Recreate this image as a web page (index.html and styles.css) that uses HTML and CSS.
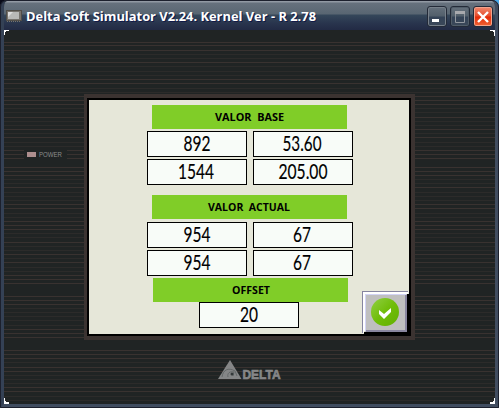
FILE: index.html
```html
<!DOCTYPE html>
<html lang="es">
<head>
<meta charset="utf-8">
<title>Delta Soft Simulator</title>
<link rel="stylesheet" href="styles.css">
</head>
<body>
<div class="window">
  <header class="titlebar">
    <svg class="app-icon" width="16" height="12" viewBox="0 0 16 12"><rect x=".5" y=".5" width="15" height="10" fill="#77736d" stroke="#514e49"/><rect x="2" y="2" width="11" height="7" fill="#b9b9b7"/><path d="M2 2h5L2 7z" fill="#ddd"/><path d="M1 11.5h14" stroke="#77736d" stroke-dasharray="1 1"/></svg>
    <svg class="title" width="294" height="20"><text x="1" y="14" textLength="290" lengthAdjust="spacingAndGlyphs">Delta Soft Simulator V2.24. Kernel Ver - R 2.78</text></svg>
    <div class="controls">
      <span class="control"><svg width="18" height="18"><path d="M4 12h7v3H4z" fill="#fff"/></svg></span>
      <span class="control"><svg width="18" height="18"><path d="M4.500 5v10.500h9V5" fill="none" stroke="#92979f"/><path d="M4 4h10v3H4z" fill="#a8a9ae"/></svg></span>
      <span class="control close"><svg width="18" height="18"><path d="M4 5l10 10M14 5L4 15" stroke="#fff" stroke-width="2.4"/></svg></span>
    </div>
  </header>
  <main class="device">
    <svg class="stripes" width="491" height="374" viewBox="4 30 491 374" shape-rendering="crispEdges">
      <path class="dim" d="M4 54.500h491M4 58.500h491M4 66.500h491M4 71.500h491M4 75.500h491M4 88.500h491M4 92.500h491M4 108.500h491M4 112.500h491M4 121.500h491M4 125.500h491M4 133.500h491M4 142.500h491M4 146.500h491M4 179.500h491M4 183.500h491M4 192.500h491M4 196.500h491M4 200.500h491M4 213.500h491M4 217.500h491M4 233.500h491M4 237.500h491M4 246.500h491M4 250.500h491M4 258.500h491M4 267.500h491M4 271.500h491M4 308.500h491M4 312.500h491M4 316.500h491M4 320.500h491M4 325.500h491M4 362.500h491M4 375.500h491M4 379.500h491M4 383.500h491M4 396.500h491M4 400.500h491"/>
      <path class="strong" d="M4 42.500h491M4 45.500h491M4 50.500h491M4 62.500h491M4 79.500h491M4 83.500h491M4 96.500h491M4 100.500h491M4 104.500h491M4 117.500h491M4 129.500h491M4 137.500h491M4 150.500h491M4 154.500h491M4 158.500h491M4 167.500h491M4 171.500h491M4 175.500h491M4 187.500h491M4 204.500h491M4 208.500h491M4 221.500h491M4 225.500h491M4 229.500h491M4 242.500h491M4 254.500h491M4 262.500h491M4 275.500h491M4 279.500h491M4 283.500h491M4 296.500h491M4 300.500h491M4 304.500h491M4 329.500h491M4 333.500h491M4 337.500h491M4 350.500h491M4 354.500h491M4 358.500h491M4 367.500h491M4 371.500h491M4 387.500h491M4 391.500h491"/>
      <path class="corner" d="M4 30h5v1H6v1H5v3H4zM495 30h-5v1h3v1h1v4h1zM4 404v-6h1v3h1v1h3v2zM495 404v-6h-1v3h-1v1h-3v2z"/>
    </svg>
    <div class="power"><i class="led"></i><svg width="25" height="9"><text x="0" y="7" textLength="23" lengthAdjust="spacingAndGlyphs">POWER</text></svg></div>
    <section class="bezel">
      <div class="screen">
        <div class="label"><svg width="195" height="24"><text x="63" y="16" textLength="69" lengthAdjust="spacingAndGlyphs" xml:space="preserve">VALOR  BASE</text></svg></div>
        <div class="values">
          <div class="field"><svg width="98" height="24"><text x="49" y="19" textLength="27" lengthAdjust="spacingAndGlyphs">892</text></svg></div>
          <div class="field"><svg width="98" height="24"><text x="48" y="19" textLength="39" lengthAdjust="spacingAndGlyphs">53.60</text></svg></div>
          <div class="field"><svg width="98" height="24"><text x="48" y="19" textLength="36" lengthAdjust="spacingAndGlyphs">1544</text></svg></div>
          <div class="field"><svg width="98" height="24"><text x="49" y="19" textLength="49" lengthAdjust="spacingAndGlyphs">205.00</text></svg></div>
        </div>
        <div class="label actual"><svg width="195" height="24"><text x="56" y="16" textLength="82" lengthAdjust="spacingAndGlyphs" xml:space="preserve">VALOR  ACTUAL</text></svg></div>
        <div class="values current">
          <div class="field"><svg width="98" height="24"><text x="49" y="19" textLength="27" lengthAdjust="spacingAndGlyphs">954</text></svg></div>
          <div class="field"><svg width="98" height="24"><text x="48" y="19" textLength="18" lengthAdjust="spacingAndGlyphs">67</text></svg></div>
          <div class="field"><svg width="98" height="24"><text x="49" y="19" textLength="27" lengthAdjust="spacingAndGlyphs">954</text></svg></div>
          <div class="field"><svg width="98" height="24"><text x="48" y="19" textLength="18" lengthAdjust="spacingAndGlyphs">67</text></svg></div>
        </div>
        <div class="label offset"><svg width="195" height="24"><text x="79" y="16" textLength="38" lengthAdjust="spacingAndGlyphs">OFFSET</text></svg></div>
        <div class="field single"><svg width="98" height="24"><text x="49" y="19" textLength="18" lengthAdjust="spacingAndGlyphs">20</text></svg></div>
        <svg class="confirm" width="49" height="45" viewBox="0 0 49 45" shape-rendering="crispEdges">
          <defs><linearGradient id="leaf" x2="1" y2="1"><stop stop-color="#91d044"/><stop offset=".5" stop-color="#70bd09"/><stop offset="1" stop-color="#61b000"/></linearGradient></defs>
          <path d="M47 0h2v45H0v-2h2v-2h43V3h2z" fill="#000"/>
          <path d="M0 0h46v1H1v41H0z" fill="#8685a0"/><path d="M1 1h45v2H3v37H2v2H1z" fill="#fff"/>
          <path d="M3 3h42v38H3z" fill="#bfbfbf"/><path d="M3 3h41v1H4v36H3z" fill="#d2d4f5"/>
          <path d="M43 4h2v37H4v-2h39z" fill="#89869f"/>
          <g shape-rendering="auto"><circle cx="23" cy="21" r="14" fill="url(#leaf)"/><path d="M17 19l5 4 7-6v4l-7 7-5-5z" fill="#fff"/></g>
        </svg>
      </div>
    </section>
    <div class="brand">
      <svg width="66" height="22" viewBox="0 0 66 22"><path d="M12 0L23.500 19H0z" fill="#858687"/><path d="M4 17c1-7 6-10 13-6l2 5M10 17c-1-4 2-6 6-5l-1 4" fill="none" stroke="#5b5f60" stroke-width=".8"/><circle cx="14" cy="14" r="1.500" fill="#333839"/><text x="24.500" y="18.500" textLength="38" lengthAdjust="spacingAndGlyphs">DELTA</text></svg>
    </div>
  </main>
</div>
</body>
</html>
```

FILE: styles.css
```css
* { box-sizing: border-box; }
body { margin: 0; background: linear-gradient(90deg, #080a18 50%, #48a8e8 50%); overflow: hidden; }
svg { display: block; overflow: visible; }
.window { width: 499px; height: 408px; border: solid #414d60; border-width: 1px 4px 4px; border-top-color: #232b38; border-left-color: #344155; border-radius: 7px 7px 0 0; background: #202424; overflow: hidden; outline: 1px solid #1c202d; outline-offset: -1px; }
.titlebar { height: 29px; display: flex; align-items: flex-start; padding: 9px 2px 0 2px; background: linear-gradient(#9199a3 0 1px, #66717d 2px, #596672 13px, #35475a 14px, #29354e 22px, #222a44 100%); }
.app-icon { flex: none; }
.title { margin: -3px 0 0 3px; flex: none; }
.title text { font: bold 13px "Open Sans", sans-serif; fill: #fff; text-shadow: 1px 1px #111947; }
.controls { display: flex; gap: 3px; margin: -4px 0 0 auto; }
.control { width: 20px; height: 21px; border: 1px solid #232a38; border-radius: 3px; background: linear-gradient(#65707c, #53606c 45%, #344357 55%, #3b4859); box-shadow: inset 0 0 0 1px #77808a; }
.control:nth-child(2) { box-shadow: inset 0 0 0 1px #515d69; }
.controls .close { background: linear-gradient(#f08a70, #e64b2b 48%, #e42a08 52%, #f06434); box-shadow: inset 0 0 0 1px #f3a38c; }
.device { position: relative; height: 374px; background: #202424; display: flow-root; }
.stripes { position: absolute; inset: 0; }
.dim { stroke: #2c2b2a; }
.strong { stroke: #393230; }
.corner { fill: #fff; }
.power { position: absolute; left: 20px; top: 120px; width: 43px; height: 9px; padding-left: 3px; background: #202424; display: flex; align-items: center; gap: 3px; }
.led { width: 9px; height: 5px; background: #ad8e8e; flex: none; }
.power text { font: 7px "Liberation Sans", sans-serif; fill: #8a8c8c; }
.bezel { position: relative; width: 331px; height: 246px; margin: 64px 0 0 80px; border: 4px solid #3b3331; border-left-width: 3px; }
.screen { position: relative; width: 324px; height: 238px; border: 2px solid #000; background: #e6e7d9; padding: 5px 0 0 58px; }
.label { width: 195px; height: 24px; margin-left: 5px; background: #80cd28; }
.label text { font: bold 11px "Open Sans", sans-serif; fill: #000; }
.values { display: grid; grid-template-columns: 100px 100px; gap: 2px 6px; margin-top: 2px; }
.field { width: 100px; height: 26px; border: 1px solid #000; background: #f8fcf8; }
.field text { font: 22px Lato, sans-serif; fill: #000; stroke: #000; stroke-width: .15px; text-anchor: middle; }
.actual { margin-top: 10px; }
.current { margin-top: 3px; }
.offset { margin: 2px 0 0 6px; }
.single { margin-left: 52px; }
.confirm { position: absolute; right: -2px; bottom: -2px; }
.brand { position: relative; margin: 20px 0 0 214px; }
.brand text { font: bold 13px "Liberation Sans", sans-serif; fill: #858687; stroke: #858687; stroke-width: .7px; }
```
